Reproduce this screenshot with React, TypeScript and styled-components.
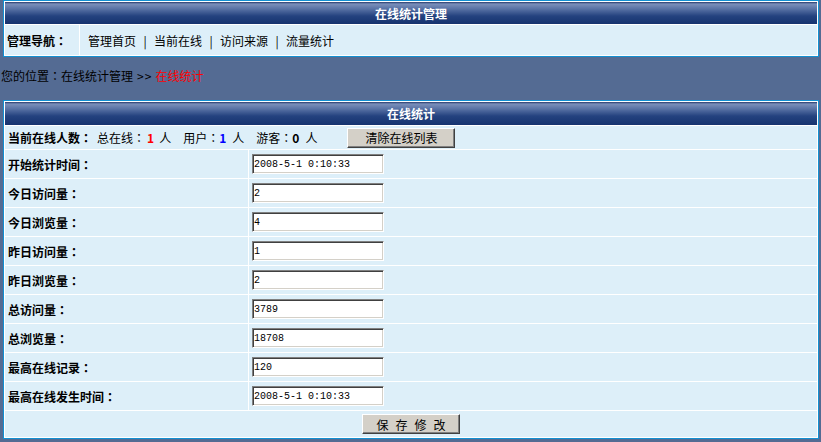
import * as React from 'react';
import styled, { createGlobalStyle } from 'styled-components';

const GlobalStyle = createGlobalStyle`
    html, body {
        margin: 0;
        padding: 0;
        background: #546b93;
    }
    body {
        font-family: "Noto Sans CJK SC", "Noto Sans", sans-serif;
        font-size: 12px;
        color: #000;
    }
`;

const Page = styled.div`
    padding: 0 2px 0 3px;
`;

const Panel = styled.div`
    border: 1px solid #1390d2;
    background: #fff;
    padding: 1px;
    display: flex;
    flex-direction: column;
    gap: 1px;
`;

const Header = styled.div<{ $h: number }>`
    height: ${(p) => p.$h}px;
    display: flex;
    align-items: center;
    justify-content: center;
    color: #fff;
    font-weight: bold;
    background: linear-gradient(#22386c 0px, #7a8fba 2px, #5871a4 7px, #24427f 14px, #16336f 100%);
`;

const NavRow = styled.div`
    display: grid;
    grid-template-columns: 74px 1fr;
    gap: 1px;
    height: 30px;
`;

const Cell = styled.div<{ $pl?: number; $bold?: boolean }>`
    background: #ddeff9;
    display: flex;
    align-items: center;
    padding-left: ${(p) => p.$pl ?? 3}px;
    font-weight: ${(p) => (p.$bold ? 'bold' : 'normal')};
    white-space: nowrap;
`;

// centred full-width colon, as in the original page font
const Colon = styled.span`
    font-family: "Noto Sans CJK TC", "Noto Sans CJK SC", sans-serif;
`;

const Sep = styled.span`
    display: inline-block;
    width: 18px;
    text-align: center;
`;

const Crumb = styled.div`
    height: 43px;
    box-sizing: border-box;
    padding-top: 10px;
    line-height: 18px;
    margin-left: -2px;
    white-space: nowrap;
`;

const Arrow = styled.span`
    display: inline-block;
    margin: 0 3px 0 4px;
    letter-spacing: 1px;
`;

const Current = styled.span`
    color: #ff0000;
`;

const OnlineRow = styled.div`
    height: 23px;
    background: #ddeff9;
    display: flex;
    align-items: center;
    padding-left: 3px;
    white-space: nowrap;
`;

const Item = styled.span<{ $ml?: number; $color?: string; $bold?: boolean }>`
    margin-left: ${(p) => p.$ml ?? 0}px;
    color: ${(p) => p.$color ?? '#000'};
    font-weight: ${(p) => (p.$bold ? 'bold' : 'normal')};
`;

const FieldRow = styled.div`
    display: grid;
    grid-template-columns: 243px 1fr;
    gap: 1px;
    height: 28px;
`;

const TextBox = styled.input`
    width: 132px;
    height: 20px;
    box-sizing: border-box;
    margin: 0;
    padding: 0 1px;
    border: 1px solid;
    border-color: #808080 #fff #fff #808080;
    box-shadow: inset 1px 1px #404040, inset -1px -1px #d4d0c8;
    background: #fff;
    font-family: "Liberation Mono", monospace;
    font-size: 10px;
    color: #000;
    outline: none;
`;

const Button = styled.button<{ $w: number; $ml?: number; $ls?: number }>`
    width: ${(p) => p.$w}px;
    height: 20px;
    margin: 0 0 0 ${(p) => p.$ml ?? 0}px;
    padding: 0 0 0 ${(p) => p.$ls ?? 0}px;
    letter-spacing: ${(p) => p.$ls ?? 0}px;
    background: #d4d0c8;
    border: 1px solid;
    border-color: #fff #404040 #404040 #fff;
    box-shadow: inset -1px -1px #808080;
    font-family: "Noto Sans CJK SC", sans-serif;
    font-size: 12px;
    color: #000;
    white-space: nowrap;
`;

const SaveRow = styled.div`
    height: 26px;
    background: #ddeff9;
    display: flex;
    align-items: center;
    justify-content: center;
`;

const fields = [
    { label: '开始统计时间', value: '2008-5-1 0:10:33' },
    { label: '今日访问量', value: '2' },
    { label: '今日浏览量', value: '4' },
    { label: '昨日访问量', value: '1' },
    { label: '昨日浏览量', value: '2' },
    { label: '总访问量', value: '3789' },
    { label: '总浏览量', value: '18708' },
    { label: '最高在线记录', value: '120' },
    { label: '最高在线发生时间', value: '2008-5-1 0:10:33' },
];

const navLinks = ['管理首页', '当前在线', '访问来源', '流量统计'];

export default function App() {
    return (
        <Page>
            <GlobalStyle />
            <Panel>
                <Header $h={22}>在线统计管理</Header>
                <NavRow>
                    <Cell $pl={2} $bold>管理导航<Colon>：</Colon></Cell>
                    <Cell $pl={8}>
                        {navLinks.map((l, i) => (
                            <React.Fragment key={l}>
                                {i > 0 && <Sep>|</Sep>}
                                <span>{l}</span>
                            </React.Fragment>
                        ))}
                    </Cell>
                </NavRow>
            </Panel>
            <Crumb>
                您的位置<Colon>：</Colon>在线统计管理<Arrow>&gt;&gt;</Arrow><Current>在线统计</Current>
            </Crumb>
            <Panel>
                <Header $h={23}>在线统计</Header>
                <OnlineRow>
                    <Item $bold>当前在线人数<Colon>：</Colon></Item>
                    <Item $ml={5}>总在线<Colon>：</Colon></Item>
                    <Item $ml={2} $color="#ff0000" $bold>1</Item>
                    <Item $ml={5}>人</Item>
                    <Item $ml={12}>用户<Colon>：</Colon></Item>
                    <Item $color="#0000ff" $bold>1</Item>
                    <Item $ml={6}>人</Item>
                    <Item $ml={12}>游客<Colon>：</Colon></Item>
                    <Item $bold>0</Item>
                    <Item $ml={6}>人</Item>
                    <Button $w={108} $ml={30}>清除在线列表</Button>
                </OnlineRow>
                {fields.map((f) => (
                    <FieldRow key={f.label}>
                        <Cell $bold>{f.label}<Colon>：</Colon></Cell>
                        <Cell>
                            <TextBox defaultValue={f.value} />
                        </Cell>
                    </FieldRow>
                ))}
                <SaveRow>
                    <Button $w={98} $ls={7}>保存修改</Button>
                </SaveRow>
            </Panel>
        </Page>
    );
}
